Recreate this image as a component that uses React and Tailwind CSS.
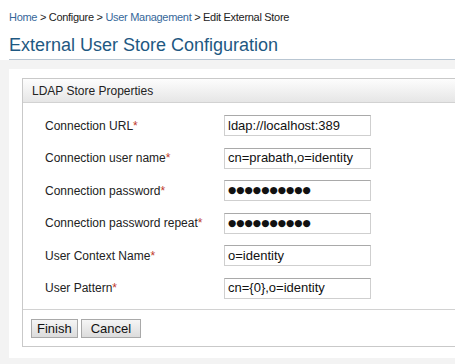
const rows = [
  { label: "Connection URL", value: "ldap://localhost:389" },
  { label: "Connection user name", value: "cn=prabath,o=identity" },
  { label: "Connection password", value: "●●●●●●●●●●", secret: true },
  { label: "Connection password repeat", value: "●●●●●●●●●●", secret: true },
  { label: "User Context Name", value: "o=identity" },
  { label: "User Pattern", value: "cn={0},o=identity" },
];

export default function App() {
  return (
    <div className="h-[364px] w-[455px] overflow-hidden bg-[#f3f3f3] font-['Liberation_Sans',Arial,sans-serif] text-[#222]">
      <div className="bg-white pl-[9px] pt-[10px]">
        <div className="text-[11px] leading-[14px] tracking-[-0.3px]">
          <span className="text-[#36679a]">Home</span>
          <span> &gt; Configure &gt; </span>
          <span className="text-[#36679a]">User Management</span>
          <span> &gt; Edit External Store</span>
        </div>
        <h1 className="mt-[11px] border-b border-[#b9c6d2] pb-[3px] text-[18px] leading-[21px] text-[#1e5882]">
          External User Store Configuration
        </h1>
      </div>
      <div className="bg-[#f3f3f3] pl-[9px] pt-[9px]">
        <div className="w-[480px] bg-white pb-[11px] pl-[13px] pt-[9px]">
          <div className="border border-[#c9c9c9] bg-white">
            <div className="h-[24px] border-b border-[#d2d2d2] bg-gradient-to-b from-[#fdfdfd] to-[#e6e6e6] pl-[9px] text-[12px] leading-[24px] text-[#222]">
              LDAP Store Properties
            </div>
            <div className="grid grid-cols-[179px_147px] gap-y-[11.5px] pb-[10px] pl-[22px] pt-[12px]">
              {rows.map((r) => (
                <div key={r.label} className="contents">
                  <div className="flex h-[21px] items-center text-[12px]">
                    {r.label}
                    <span className="text-[#c0392b]">*</span>
                  </div>
                  <div
                    className={
                      "flex h-[21px] items-center border border-t-[#a9a9a9] border-[#cfcfcf] bg-white pl-[3px] text-[#111] " +
                      (r.secret ? "font-['DejaVu_Sans',sans-serif] text-[9.5px]" : "text-[13px]")
                    }
                  >
                    {r.value}
                  </div>
                </div>
              ))}
            </div>
            <div className="flex gap-[3px] border-t border-[#d2d2d2] bg-white pb-[8px] pl-[8px] pt-[9px]">
              <button className="h-[19px] border border-[#a9a9a9] bg-gradient-to-b from-[#f5f5f5] to-[#dcdcdc] px-[5px] text-[13px] leading-[17px] text-[#111]">
                Finish
              </button>
              <button className="h-[19px] border border-[#a9a9a9] bg-gradient-to-b from-[#f5f5f5] to-[#dcdcdc] px-[9px] text-[13px] leading-[17px] text-[#111]">
                Cancel
              </button>
            </div>
          </div>
        </div>
      </div>
    </div>
  );
}
